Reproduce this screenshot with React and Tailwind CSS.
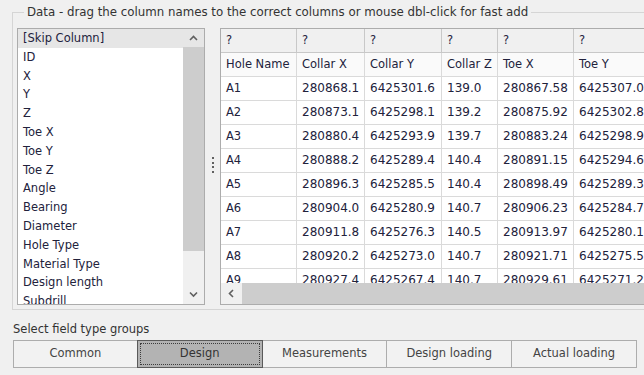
import React from "react";

const listItems = [
  "[Skip Column]", "ID", "X", "Y", "Z", "Toe X", "Toe Y", "Toe Z", "Angle", "Bearing",
  "Diameter", "Hole Type", "Material Type", "Design length", "Subdrill",
];

const rows = [
  ["A1", "280868.1", "6425301.6", "139.0", "280867.58", "6425307.07"],
  ["A2", "280873.1", "6425298.1", "139.2", "280875.92", "6425302.80"],
  ["A3", "280880.4", "6425293.9", "139.7", "280883.24", "6425298.90"],
  ["A4", "280888.2", "6425289.4", "140.4", "280891.15", "6425294.60"],
  ["A5", "280896.3", "6425285.5", "140.4", "280898.49", "6425289.33"],
  ["A6", "280904.0", "6425280.9", "140.7", "280906.23", "6425284.74"],
  ["A7", "280911.8", "6425276.3", "140.5", "280913.97", "6425280.14"],
  ["A8", "280920.2", "6425273.0", "140.7", "280921.71", "6425275.50"],
  ["A9", "280927.4", "6425267.4", "140.7", "280929.61", "6425271.22"],
];

const heads = ["Hole Name", "Collar X", "Collar Y", "Collar Z", "Toe X", "Toe Y"];
const cols = "grid grid-cols-[76px_68px_77px_56px_76px_100px]";

function Chevron({ dir }) {
  const d = {
    up: "M1 5 L4.5 1.5 L8 5",
    down: "M1 1.5 L4.5 5 L8 1.5",
    left: "M5 1 L1.5 4.5 L5 8",
  }[dir];
  const w = dir === "left" ? 7 : 9;
  const h = dir === "left" ? 9 : 7;
  return (
    <svg width={w} height={h} viewBox={`0 0 ${w} ${h}`}>
      <path d={d} fill="none" stroke="#606060" strokeWidth="1.6" />
    </svg>
  );
}

export default function App() {
  const btns = ["Common", "Design", "Measurements", "Design loading", "Actual loading"];
  return (
    <div
      className="w-[644px] h-[375px] overflow-hidden bg-[#f0f0f0] pt-3 text-[11.5px] text-[#22223c]"
      style={{ fontFamily: '"DejaVu Sans", Verdana, sans-serif' }}
    >
      {/* Group box */}
      <div className="relative ml-3 w-[700px] border border-[#d5d5d5] pt-[15px] pb-1 pl-1 pr-1">
        <span className="absolute -top-[9px] left-[11px] bg-[#f0f0f0] px-[3px] text-[11.8px] leading-[16px] text-[#333]">
          Data - drag the column names to the correct columns or mouse dbl-click for fast add
        </span>
        <div className="flex h-[277px]">
          {/* List box */}
          <div className="flex w-[188px] shrink-0 border border-[#acacac] bg-white">
            <div className="flex-1 overflow-hidden">
              {listItems.map((t, i) => (
                <div
                  key={t}
                  className={`h-[18.8px] pl-[5px] leading-[18.8px] whitespace-nowrap ${i === 0 ? "bg-[#e6e6e6]" : ""}`}
                >
                  {t}
                </div>
              ))}
            </div>
            <div className="flex w-[21px] flex-col bg-[#f0f0f0]">
              <div className="flex h-[18px] items-center justify-center bg-[#e6e6e6]">
                <Chevron dir="up" />
              </div>
              <div className="h-[204px] bg-[#cdcdcd]" />
              <div className="flex-1" />
              <div className="flex h-[19px] items-center justify-center">
                <Chevron dir="down" />
              </div>
            </div>
          </div>
          {/* Splitter */}
          <div className="flex w-[15px] shrink-0 flex-col items-center justify-center gap-[2.7px] pb-[3px]">
            <div className="h-[2px] w-[2px] bg-[#606060]" />
            <div className="h-[2px] w-[2px] bg-[#606060]" />
            <div className="h-[2px] w-[2px] bg-[#606060]" />
            <div className="h-[2px] w-[2px] bg-[#606060]" />
          </div>
          {/* Grid */}
          <div className="flex flex-1 flex-col overflow-hidden border border-[#acacac] bg-white">
            <div className="flex-1 overflow-hidden">
              <div className={`${cols} h-6 bg-[#f0f0f0]`}>
                {heads.map((h, i) => (
                  <div key={i} className="border-r border-b border-[#c8c8c8] pl-[5px] leading-[23px]">?</div>
                ))}
              </div>
              <div className={`${cols} h-6 bg-[#fafafa]`}>
                {heads.map((h) => (
                  <div key={h} className="border-r border-b border-[#dadada] pl-[5px] leading-[23px] whitespace-nowrap">{h}</div>
                ))}
              </div>
              {rows.map((r) => (
                <div key={r[0]} className={`${cols} h-6`}>
                  {r.map((c, j) => (
                    <div
                      key={j}
                      className={`border-r border-b border-[#dadada] pl-[5px] leading-[23px] whitespace-nowrap overflow-hidden ${j === 0 ? "" : "text-[12px]"}`}
                    >
                      {c}
                    </div>
                  ))}
                </div>
              ))}
            </div>
            <div className="flex h-[21px] shrink-0">
              <div className="flex w-[21px] items-center justify-center bg-[#f0f0f0]">
                <Chevron dir="left" />
              </div>
              <div className="flex-1 bg-[#cdcdcd]" />
            </div>
          </div>
        </div>
      </div>

      {/* Bottom */}
      <div className="mt-[11px] ml-[13px] leading-4 text-[#333]">Select field type groups</div>
      <div className="mt-[3px] ml-[13px] grid h-[28px] w-[624px] grid-cols-5">
        {btns.map((b, i) =>
          i === 1 ? (
            <div key={b} className="relative -ml-px flex items-center justify-center border border-[#5a5a5a] bg-[#b3b3b3] text-[#333]">
              <div className="absolute inset-[2px] border border-dotted border-[#3c3c3c]" />
              {b}
            </div>
          ) : (
            <div
              key={b}
              className={`flex items-center justify-center border border-[#adadad] bg-[#f2f2f2] text-[#444] ${i === 0 ? "" : "-ml-px"}`}
            >
              {b}
            </div>
          )
        )}
      </div>
    </div>
  );
}
